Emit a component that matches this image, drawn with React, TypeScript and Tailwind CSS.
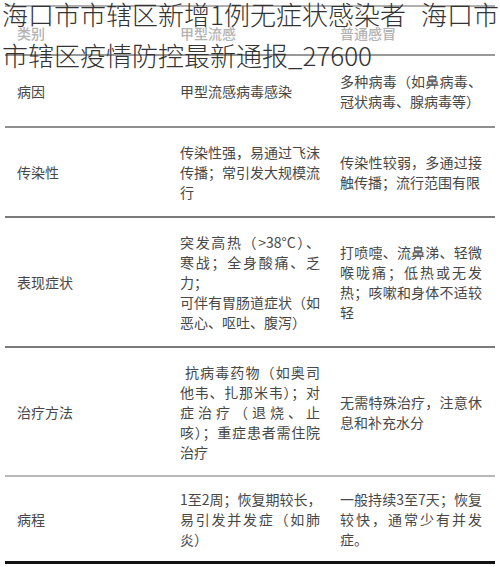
import React from "react";

type Line = { t: string; j?: boolean; indent?: boolean };

const J = (t: string): Line => ({ t, j: true });
const L = (t: string): Line => ({ t });

const rows: { h: string; border: string; c1: string; c2: Line[]; c3: Line[] }[] = [
  {
    h: "h-[72px]",
    border: "border-b-2 border-[#8f8f8f]",
    c1: "病因",
    c2: [L("甲型流感病毒感染")],
    c3: [J("多种病毒（如鼻病毒、"), L("冠状病毒、腺病毒等）")],
  },
  {
    h: "h-[90px]",
    border: "border-b-2 border-[#7a7a7a]",
    c1: "传染性",
    c2: [J("传染性强，易通过飞沫"), J("传播；常引发大规模流"), L("行")],
    c3: [J("传染性较弱，多通过接"), L("触传播；流行范围有限")],
  },
  {
    h: "h-[130px]",
    border: "border-b-2 border-[#7a7a7a]",
    c1: "表现症状",
    c2: [
      J("突发高热（>38°C）、"),
      J("寒战；全身酸痛、乏"),
      L("力；"),
      J("可伴有胃肠道症状（如"),
      L("恶心、呕吐、腹泻）"),
    ],
    c3: [J("打喷嚏、流鼻涕、轻微"), J("喉咙痛；低热或无发"), J("热；咳嗽和身体不适较"), L("轻")],
  },
  {
    h: "h-[129px]",
    border: "border-b-2 border-[#b8b8b8]",
    c1: "治疗方法",
    c2: [
      { t: "抗病毒药物（如奥司", j: true, indent: true },
      J("他韦、扎那米韦）；对"),
      J("症治疗（退烧、止"),
      J("咳）；重症患者需住院"),
      L("治疗"),
    ],
    c3: [J("无需特殊治疗，注意休"), L("息和补充水分")],
  },
  {
    h: "h-[87px]",
    border: "border-b-[3px] border-[#111111]",
    c1: "病程",
    c2: [J("1至2周；恢复期较长，"), J("易引发并发症（如肺"), L("炎）")],
    c3: [J("一般持续3至7天；恢复"), J("较快，通常少有并发"), L("症。")],
  },
];

function Cell({ lines, w }: { lines: Line[]; w: string }) {
  return (
    <div className={`${w} flex flex-col`}>
      {lines.map((l, i) => (
        <div
          key={i}
          className={`leading-[20px] whitespace-nowrap ${
            l.j ? "text-justify [text-align-last:justify]" : "text-left"
          } ${l.indent ? "pl-[5px]" : ""}`}
        >
          {l.t}
        </div>
      ))}
    </div>
  );
}

export default function App() {
  return (
    <div
      className="relative w-[500px] h-[567px] bg-white overflow-hidden"
      style={{ fontFamily: '"Noto Sans CJK SC", "Noto Sans", sans-serif' }}
    >
      <div className="pt-[5px] px-[5px]">
        <div className="border-t-2 border-[#b0b0b0]">
          {/* header */}
          <div className="h-[49px] border-b-2 border-[#999999] grid grid-cols-[163px_160px_167px] items-center pt-[5px] text-[14px] font-medium text-[#b3b3b3]">
            <div className="pl-[12px]">类别</div>
            <div className="pl-[12px]">甲型流感</div>
            <div className="pl-[12px]">普通感冒</div>
          </div>
          {rows.map((r, i) => (
            <div
              key={i}
              className={`${r.h} ${r.border} grid grid-cols-[163px_160px_167px] items-center text-[14px] text-[#474747]`}
            >
              <div className="pl-[12px] leading-[20px]">{r.c1}</div>
              <div className="pl-[12px]">
                <Cell lines={r.c2} w="w-[140px]" />
              </div>
              <div className="pl-[12px]">
                <Cell lines={r.c3} w="w-[142px]" />
              </div>
            </div>
          ))}
        </div>
      </div>

      {/* title overlay */}
      <div className="absolute left-[2px] top-[-7px] text-[26px] leading-[41px] font-extralight text-[#333333] whitespace-nowrap">
        <div>
          海口市市辖区新增1例无症状感染者<span className="inline-block w-[15px]"></span>海口市
        </div>
        <div>市辖区疫情防控最新通报_27600</div>
      </div>
    </div>
  );
}
